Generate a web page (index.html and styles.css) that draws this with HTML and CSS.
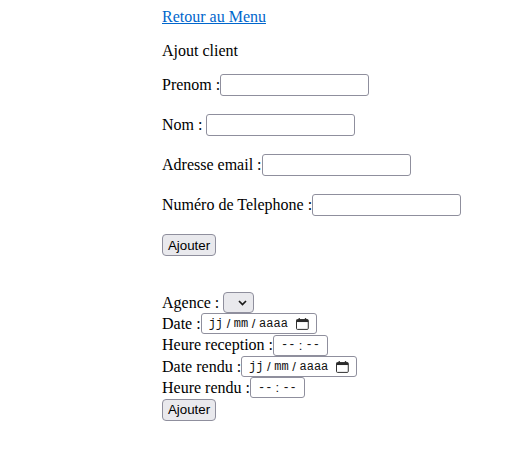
FILE: index.html
```html
<!DOCTYPE html>
<html lang="fr">
<head>
<meta charset="utf-8">
<title>Ajout client</title>
<link rel="stylesheet" href="styles.css">
</head>
<body>
<div class="page">
  <a class="back" href="#">Retour au Menu</a>
  <form class="client">
    <p class="title">Ajout client</p>
    <div class="row"><label>Prenom :</label><input type="text" class="txt"></div>
    <div class="row"><label>Nom :&nbsp;</label><input type="text" class="txt"></div>
    <div class="row"><label>Adresse email :</label><input type="text" class="txt"></div>
    <div class="row"><label>Numéro de Telephone :</label><input type="text" class="txt"></div>
    <div class="btnrow"><button type="button" class="btn">Ajouter</button></div>
  </form>
  <form class="resa">
    <div class="line"><label>Agence :&nbsp;</label>
      <span class="sel" role="combobox"><svg width="9" height="6" viewBox="0 0 9 6"><polyline points="1,1 4.5,4.5 8,1" fill="none" stroke="#1a1a1a" stroke-width="1.7"/></svg></span>
    </div>
    <div class="line"><label>Date :</label>
      <span class="dt"><span class="f">jj</span><span class="sep">/</span><span class="f">mm</span><span class="sep">/</span><span class="f">aaaa</span>
        <svg class="cal" width="13" height="12" viewBox="0 0 13 12"><rect x="0.5" y="1.5" width="12" height="10" rx="1" fill="none" stroke="#2b2b2b"/><rect x="0.5" y="1.5" width="12" height="2.5" fill="#2b2b2b"/><rect x="2.6" y="0" width="1.4" height="2" fill="#2b2b2b"/><rect x="9" y="0" width="1.4" height="2" fill="#2b2b2b"/></svg>
      </span>
    </div>
    <div class="line"><label>Heure reception :</label>
      <span class="tm"><span class="f">--</span><span class="sep">:</span><span class="f">--</span></span>
    </div>
    <div class="line"><label>Date rendu :</label>
      <span class="dt"><span class="f">jj</span><span class="sep">/</span><span class="f">mm</span><span class="sep">/</span><span class="f">aaaa</span>
        <svg class="cal" width="13" height="12" viewBox="0 0 13 12"><rect x="0.5" y="1.5" width="12" height="10" rx="1" fill="none" stroke="#2b2b2b"/><rect x="0.5" y="1.5" width="12" height="2.5" fill="#2b2b2b"/><rect x="2.6" y="0" width="1.4" height="2" fill="#2b2b2b"/><rect x="9" y="0" width="1.4" height="2" fill="#2b2b2b"/></svg>
      </span>
    </div>
    <div class="line"><label>Heure rendu :</label>
      <span class="tm"><span class="f">--</span><span class="sep">:</span><span class="f">--</span></span>
    </div>
    <div class="line btnline"><button type="button" class="btn">Ajouter</button></div>
  </form>
</div>
</body>
</html>
```
FILE: styles.css
```css
html, body {
  background: #fff;
}
body {
  margin: 8px;
  font-family: "Liberation Serif", "Times New Roman", serif;
  font-size: 16px;
  color: #000;
}
.page {
  margin-left: 154px;
}
.back {
  color: #0066cc;
}
.client {
  margin: 0;
}
.title {
  margin: 16px 0 14px;
}
.row {
  display: flex;
  align-items: center;
  height: 22px;
  margin-bottom: 18px;
  white-space: pre;
}
.txt {
  height: 22px;
  width: 149px;
  padding: 1px 2px;
  border: 1px solid #8f8f9d;
  border-radius: 3px;
  font: 13.33px "Liberation Sans", Arial, sans-serif;
  box-sizing: border-box;
  background: #fff;
}
.btnrow {
  display: flex;
  height: 22px;
}
.btn {
  font: 13.33px "Liberation Sans", Arial, sans-serif;
  width: 54px;
  height: 22px;
  padding: 0;
  border: 1px solid #8f8f9d;
  border-radius: 4px;
  background: #e9e9ed;
  color: #000;
  box-sizing: border-box;
}
.resa {
  margin-top: 36px;
}
.line {
  display: flex;
  align-items: center;
  height: 21.3px;
  white-space: pre;
}
.btnline {
  height: 22px;
  margin-top: 0.5px;
}
.sel {
  display: inline-flex;
  align-items: center;
  justify-content: center;
  width: 31px;
  height: 21px;
  box-sizing: border-box;
  border: 1px solid #8f8f9d;
  border-radius: 4px;
  background: #e9e9ed;
  padding-left: 8px;
}
.dt, .tm {
  display: inline-flex;
  align-items: center;
  height: 21px;
  box-sizing: border-box;
  border: 1px solid #8f8f9d;
  border-radius: 3px;
  background: #fff;
  color: #111;
}
.dt {
  width: 116px;
  padding: 0 7px;
}
.tm {
  width: 55px;
  padding: 0 6px 0 7px;
}
.f {
  font: 12px "Liberation Mono", "DejaVu Sans Mono", monospace;
}
.sep {
  font: 13px "Liberation Sans", Arial, sans-serif;
  display: inline-block;
  width: 11px;
  text-align: center;
}
.tm .sep {
  width: 10px;
}
.cal {
  margin-left: 8px;
}
```
